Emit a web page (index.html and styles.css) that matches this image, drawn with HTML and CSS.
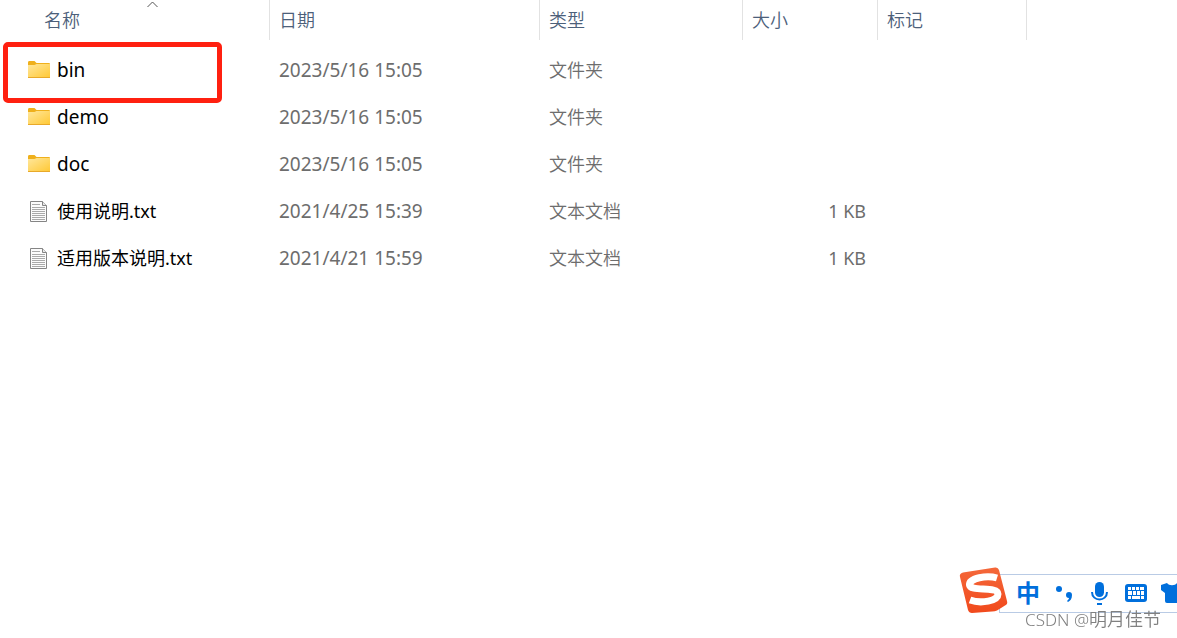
FILE: index.html
```
<!DOCTYPE html>
<html lang="zh-CN">
<head>
	<meta charset="utf-8">
	<meta name="viewport" content="width=device-width, initial-scale=1.0">
	<title>bin</title>
	<link rel="stylesheet" href="styles.css">
</head>
<body>
	<!-- shared icons -->
	<svg class="defs" width="0" height="0" aria-hidden="true">
		<linearGradient id="folderFill" x1="0" y1="0" x2="1" y2="1">
			<stop offset="0" stop-color="#ffe79c"/>
			<stop offset="1" stop-color="#ffc937"/>
		</linearGradient>
		<linearGradient id="logoFill" x1="0" y1="0" x2="0" y2="1">
			<stop offset="0" stop-color="#f4683a"/>
			<stop offset="1" stop-color="#f1491c"/>
		</linearGradient>
		<symbol id="folder" viewBox="0 0 22 22">
			<path d="M0 2.500Q0 1 1 1H6.500L8.500 3H21Q22 3 22 4V17.500H0Z" fill="#efb01c"/>
			<path d="M0 5H6.500L8.500 4H22V17H0Z" fill="url(#folderFill)"/>
			<path d="M0 17H22V17.500Q22 18 21.500 18H.5Q0 18 0 17.500Z" fill="#e8a92a"/>
		</symbol>
		<symbol id="file" viewBox="0 0 22 22">
			<path d="M2.500 .5H14.500L18.500 4.500V20.500H2.500Z" fill="#fcfcfc" stroke="#858585"/>
			<path d="M14.500 .5V4.500H18.500" fill="#e8e8e8" stroke="#858585"/>
			<path d="M4 3.500H12M4 6.500H17M4 8.500H17M4 10.500H17M4 12.500H17M4 14.500H17M4 16.500H17M4 18.500H17" stroke="#aaa"/>
		</symbol>
	</svg>

	<table class="files">
		<colgroup>
			<col class="col-name">
			<col class="col-date">
			<col class="col-type">
			<col class="col-size">
			<col class="col-tag">
			<col>
		</colgroup>
		<thead>
			<tr>
				<th class="sorted" aria-sort="ascending">
					<button type="button">名称</button>
					<svg class="arrow" width="11" height="7" viewBox="0 0 11 7"><path d="M.5 6L5.500 1L10.500 6" fill="none" stroke="#555"/></svg>
				</th>
				<th><button type="button">日期</button></th>
				<th><button type="button">类型</button></th>
				<th><button type="button">大小</button></th>
				<th><button type="button">标记</button></th>
				<td></td>
			</tr>
		</thead>
		<tbody>
			<tr>
				<td class="name marked"><svg class="icon"><use href="#folder"/></svg><span class="latin">bin</span></td>
				<td class="latin">2023/5/16 15:05</td>
				<td>文件夹</td>
				<td></td>
				<td></td>
				<td></td>
			</tr>
			<tr>
				<td class="name"><svg class="icon"><use href="#folder"/></svg><span class="latin">demo</span></td>
				<td class="latin">2023/5/16 15:05</td>
				<td>文件夹</td>
				<td></td>
				<td></td>
				<td></td>
			</tr>
			<tr>
				<td class="name"><svg class="icon"><use href="#folder"/></svg><span class="latin">doc</span></td>
				<td class="latin">2023/5/16 15:05</td>
				<td>文件夹</td>
				<td></td>
				<td></td>
				<td></td>
			</tr>
			<tr>
				<td class="name"><svg class="icon"><use href="#file"/></svg><span>使用说明.txt</span></td>
				<td class="latin">2021/4/25 15:39</td>
				<td>文本文档</td>
				<td class="size">1 KB</td>
				<td></td>
				<td></td>
			</tr>
			<tr>
				<td class="name"><svg class="icon"><use href="#file"/></svg><span>适用版本说明.txt</span></td>
				<td class="latin">2021/4/21 15:59</td>
				<td>文本文档</td>
				<td class="size">1 KB</td>
				<td></td>
				<td></td>
			</tr>
		</tbody>
	</table>

	<!-- input method bar, runs off the right edge -->
	<div class="ime">
		<svg class="logo" width="50" height="48" viewBox="0 0 50 48">
			<path d="M4 5.500L36 .5Q39 0 40 3L48 34Q49 37 46 38.500L38 43.500Q36 44.500 33 44.500L13 46Q10 46 9 43L1 10Q0 6.500 4 5.500Z" fill="url(#logoFill)"/>
			<path d="M38 11C28 8 10 11 10.500 18C11 25 39 19 39 27C39 34 22 37 11 33" fill="none" stroke="#fff" stroke-width="7"/>
		</svg>
		<button type="button" class="lang">中</button>
		<button type="button" aria-label="标点">
			<svg width="24" height="24" viewBox="0 0 24 24"><circle cx="7" cy="8" r="3"/><path d="M17 11a3 3 0 0 1 3 3c0 4-2 6-4 7l-1-1c1-1 2-2 2-3a3 3 0 0 1 0-6z"/></svg>
		</button>
		<button type="button" aria-label="语音">
			<svg width="24" height="24" viewBox="0 0 24 24"><rect x="7" y="1" width="9" height="15" rx="4.500"/><path d="M4 11c0 10 15 10 15 0" fill="none" stroke="#006fdc" stroke-width="2"/><path d="M9 23h5" stroke="#006fdc" stroke-width="2"/></svg>
		</button>
		<button type="button" aria-label="键盘">
			<svg width="24" height="24" viewBox="0 0 24 24"><rect x="1" y="3" width="22" height="18" rx="3"/><path d="M4 6h3v3H4zM8 6h3v3H8zM12 6h3v3h-3zM16 6h4v3h-4zM4 10h4v4H4zM9 10h3v4H9zM13 10h3v4h-3zM17 10h3v4h-3zM4 15h3v3H4zM8 15h8v3H8zM17 15h3v3h-3z" fill="#fff"/></svg>
		</button>
		<button type="button" aria-label="皮肤">
			<svg width="24" height="24" viewBox="0 0 24 24"><path d="M7 2c2 3 8 3 10 0l6 2v6l-4 2v8q0 2-2 2H7q-2 0-2-2v-8l-4-3V4z"/></svg>
		</button>
	</div>
	<div class="watermark"><span>CSDN @</span>明月佳节</div>
</body>
</html>
```
FILE: styles.css
```
body {
	margin: 0;
	min-height: 100vh;
	overflow: hidden;
	background-color: #fff;
	color: #6d6d6d;
	font-family: "Noto Sans", "Noto Sans CJK SC", sans-serif;
	font-size: 18px;
	font-weight: 350;
	line-height: 24px;
}

button {
	padding: 0;
	border: none;
	background: none;
	color: inherit;
	font: inherit;
}

.defs {
	position: absolute;
}

/* file list */
.files {
	width: 100%;
	table-layout: fixed;
	border-collapse: separate;
	border-spacing: 0;
}

.col-name,
.col-date {
	width: 270px;
}

.col-type {
	width: 203px;
}

.col-size {
	width: 135px;
}

.col-tag {
	width: 149px;
}

.files th {
	height: 40px;
	box-sizing: border-box;
	padding: 0 9px;
	border-right: 1px solid #e2e2e2;
	color: #4c607a;
	font-weight: 350;
	text-align: left;
}

.files .sorted {
	position: relative;
	padding-left: 44px;
}

.arrow {
	position: absolute;
	top: 1px;
	left: 147px;
}

/* space between the header and the first row */
.files tbody::before {
	content: "";
	display: block;
	height: 6px;
}

.files tbody td {
	height: 47px;
	padding: 0 9px;
	white-space: nowrap;
}

.files .name {
	position: relative;
	padding-left: 28px;
	color: #000;
	font-weight: 400;
}

.latin {
	font-size: 19px;
	font-weight: 400;
}

.icon {
	width: 22px;
	height: 22px;
	margin-right: 7px;
	vertical-align: middle;
}

.name span {
	vertical-align: middle;
}

.files .size {
	padding-right: 12px;
	font-weight: 400;
	text-align: right;
}

/* red frame round the row */
.marked::after {
	content: "";
	position: absolute;
	top: -4px;
	left: 3px;
	right: 48px;
	bottom: -10px;
	border: 5px solid #ff2010;
	border-radius: 5px;
}

/* input method bar */
.ime {
	position: fixed;
	right: -14px;
	bottom: 25px;
	display: flex;
	align-items: flex-start;
	height: 37px;
	padding-left: 10px;
	border: 1px solid #b9cbe5;
	background-color: #fff;
}

.ime button {
	display: flex;
	justify-content: center;
	align-items: center;
	width: 36px;
	height: 36px;
	color: #006fdc;
	fill: #006fdc;
}

.ime .lang {
	font-size: 24px;
	font-weight: 700;
}

.logo {
	position: absolute;
	top: -8px;
	left: -41px;
}

.watermark {
	position: fixed;
	right: 16px;
	bottom: 6px;
	color: #808080;
}

.watermark span {
	font-size: 17px;
}
```
